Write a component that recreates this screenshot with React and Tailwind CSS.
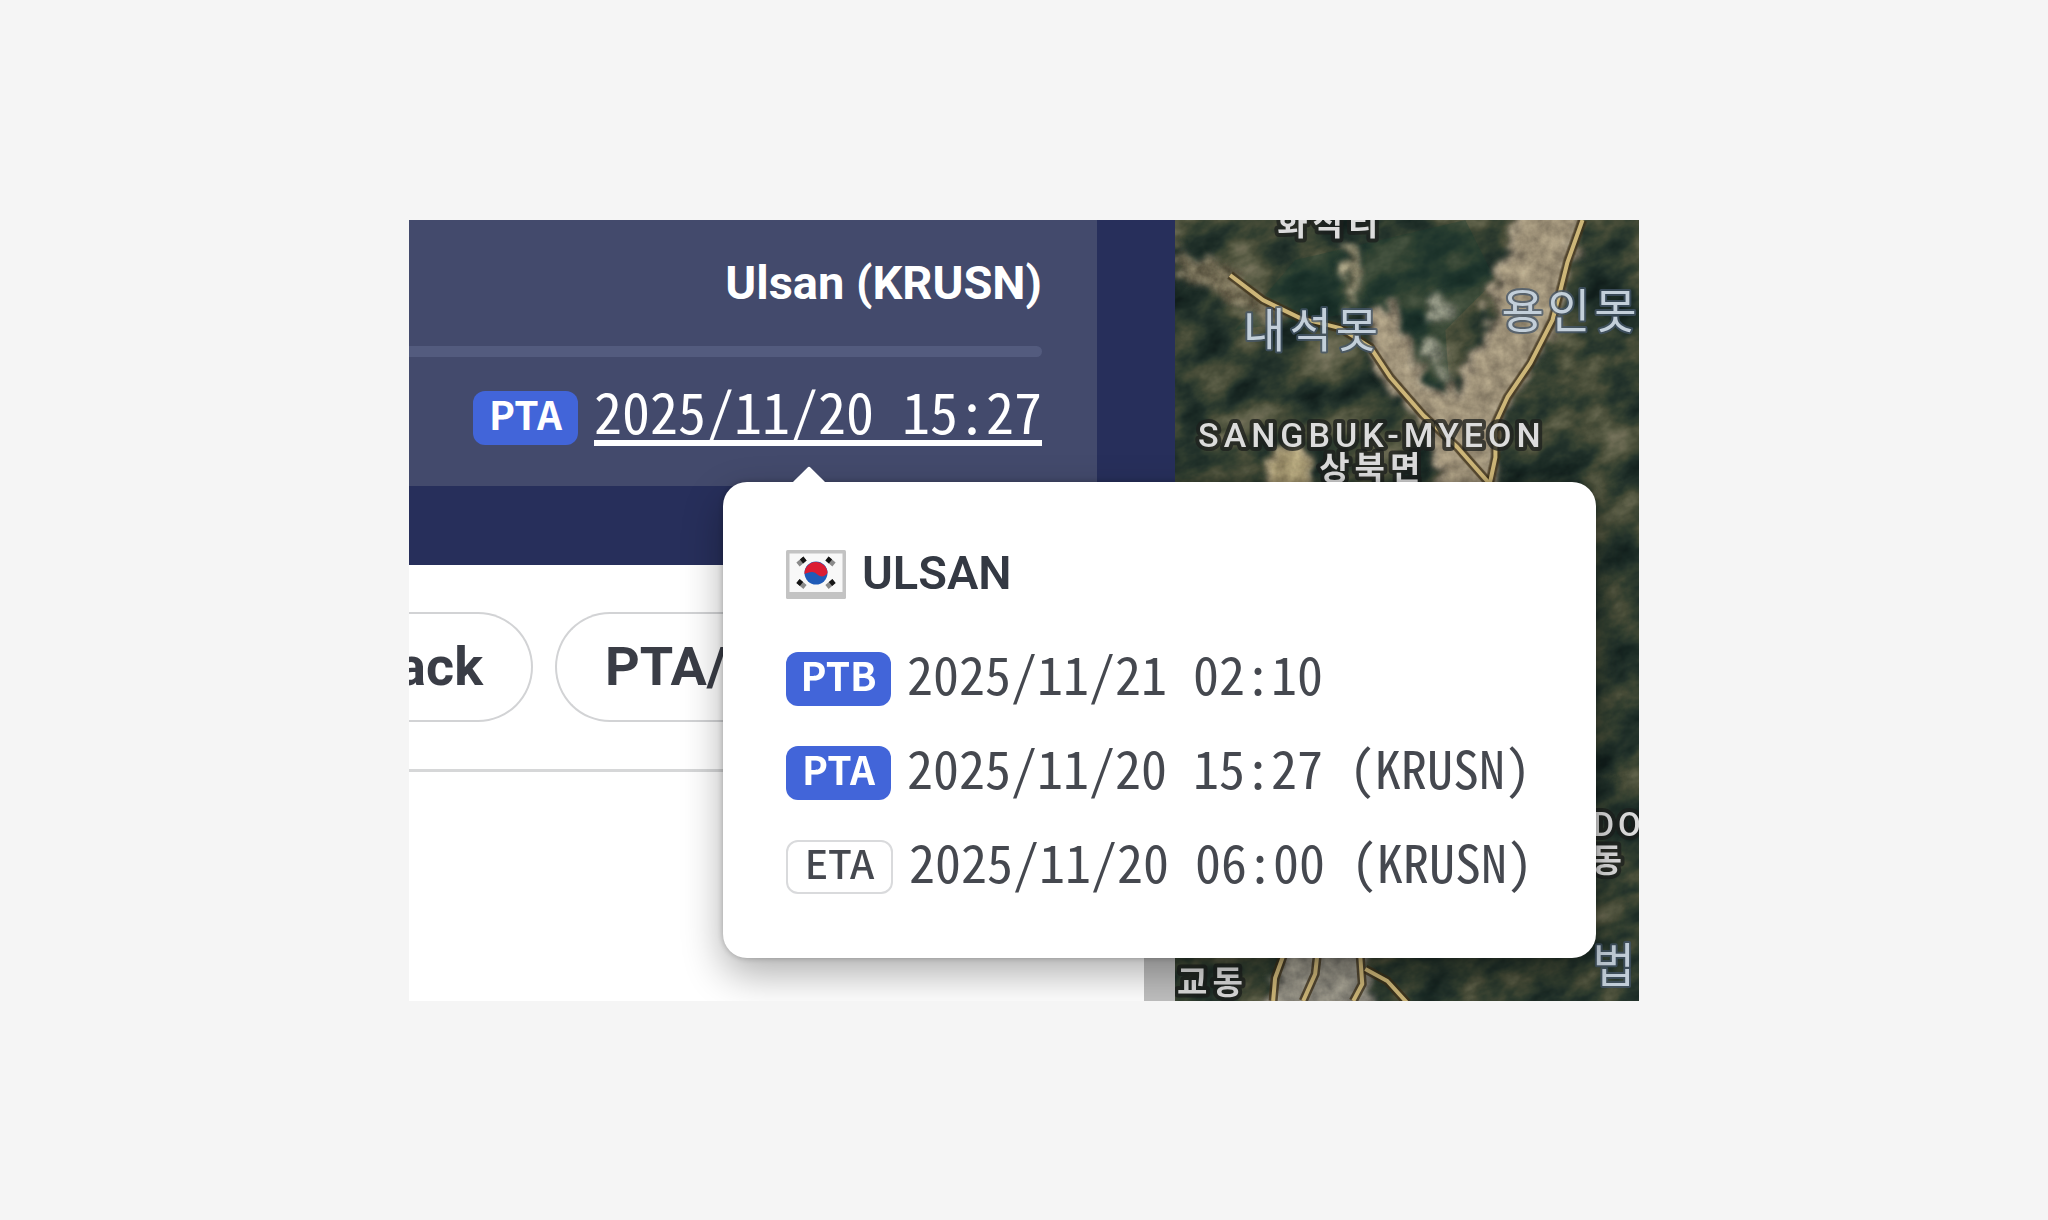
const SANS = "font-[Roboto,'Noto_Sans_CJK_KR',sans-serif]";
const MONO = "font-['Noto_Sans_Mono_CJK_KR','Noto_Sans_CJK_KR',monospace] slashed-zero";

function Badge({ outline, children }) {
  return (
    <span
      className={
        "font-['Noto_Sans_CJK_KR',sans-serif] flex h-[54px] shrink-0 items-center justify-center rounded-xl text-[39px] leading-none pb-2 " +
        (outline
          ? "w-[107px] border-2 border-[#d9dadc] font-medium text-[#45484f]"
          : "w-[105px] bg-[#4265d9] font-bold text-white")
      }
    >
      {children}
    </span>
  );
}

function KoreaFlag() {
  return (
    <svg viewBox="0 0 60 50" className="h-[50px] w-[60px] shrink-0" role="img" aria-label="South Korea">
      <rect width="60" height="49" rx="1.500" fill="#c3c3c3" />
      <rect x="3.500" y="3.500" width="53" height="38.500" fill="#f8f8f8" />
      <circle cx="30" cy="23" r="11.500" fill="#1f5bb8" />
      <path d="M18.500 24a11.500 11.500 0 0 1 23 -1c-2 3-5 4-7.500 3c-3-1-4-4-8-4c-3 0-5 1-7.500 2z" fill="#dc1c33" />
      <g fill="none">
        <path d="M12 14.500l7-6M48 14.500l-7-6M12 31l7 6M48 31l-7 6" stroke="#8a8a8a" strokeWidth="5" />
        <path d="M15.500 11.500l3.500-3M44.500 11.500l-3.500-3M12 31l3.500 3M48 31l-3.500 3" stroke="#151515" strokeWidth="5" />
      </g>
    </svg>
  );
}

function Label({ x, y, size, weight = 700, fill = "#dcdcdc", halo = "#1c1f1e", haloWidth = 8, gap = 0, children }) {
  return (
    <text
      x={x}
      y={y}
      fontSize={size}
      fontWeight={weight}
      fill={fill}
      stroke={halo}
      strokeWidth={haloWidth}
      strokeOpacity="0.75"
      strokeLinejoin="round"
      paintOrder="stroke"
      letterSpacing={gap}
    >
      {children}
    </text>
  );
}

function SatelliteMap() {
  const roads = [
    "M55 55L88 80L125 98L165 108L195 127L215 157L248 195L282 227L305 253L320 270",
    "M407 0L392 42L385 70L377 100L355 143L332 177L320 203L320 237L314 265",
    "M108 735L100 757L98 780",
    "M142 735L140 753L128 780",
    "M185 735L187 763L178 780",
    "M190 748L212 760L232 782",
  ];
  return (
    <svg
      viewBox="0 0 464 780"
      preserveAspectRatio="xMinYMin slice"
      className={"block h-full w-full " + SANS}
      role="img"
      aria-label="Satellite map"
    >
      <defs>
        <filter id="forest" x="0" y="0" width="100%" height="100%" colorInterpolationFilters="sRGB">
          <feTurbulence type="fractalNoise" baseFrequency="0.018 0.028" numOctaves="5" seed="4" />
          <feColorMatrix values="1.2 0 0 0 -0.1  1.2 0 0 0 -0.1  1.2 0 0 0 -0.1  0 0 0 0 1" />
          <feComponentTransfer>
            <feFuncR type="table" tableValues="0.05 0.07 0.10 0.14 0.20 0.28 0.36 0.44 0.5" />
            <feFuncG type="table" tableValues="0.10 0.12 0.16 0.20 0.25 0.30 0.37 0.43 0.5" />
            <feFuncB type="table" tableValues="0.09 0.11 0.14 0.17 0.19 0.22 0.28 0.34 0.4" />
          </feComponentTransfer>
        </filter>
        <filter id="town" x="-10%" y="-10%" width="120%" height="120%" colorInterpolationFilters="sRGB">
          <feTurbulence type="fractalNoise" baseFrequency="0.07" numOctaves="4" seed="5" result="n" />
          <feColorMatrix in="n" values="1.3 0 0 0 -0.14  1.25 0 0 0 -0.15  1.1 0 0 0 -0.13  0 0 0 0 1" result="grain" />
          <feDisplacementMap in="SourceGraphic" in2="n" scale="34" xChannelSelector="R" yChannelSelector="G" result="shape" />
          <feGaussianBlur in="shape" stdDeviation="3" result="soft" />
          <feComposite in="grain" in2="soft" operator="in" result="a" />
          <feBlend in="a" in2="soft" mode="multiply" result="b" />
          <feBlend in="b" in2="soft" mode="screen" />
        </filter>
      </defs>
      <rect width="464" height="780" fill="#24352c" />
      <g transform="rotate(-20 232 390)">
        <rect x="-300" y="-200" width="1064" height="1180" filter="url(#forest)" />
      </g>
      <path d="M120 40L290 0L320 60L270 110L275 180L230 170L200 90L60 110Z" fill="#1b3b30" opacity="0.35" />
      <g filter="url(#town)">
        <path d="M345 -10H405L392 60L378 110L340 170L320 205L322 270L262 270L258 205L205 160L190 100L212 85L232 125L250 165L284 178L300 130L318 100L312 70L336 30Z" fill="#7d735f" />
        <path d="M98 230H135L138 275H90Z" fill="#857a59" />
        <path d="M170 30L180 20L182 85L174 85Z" fill="#7c785c" />
        <path d="M0 30L60 50L110 100L100 104L40 70L0 55Z" fill="#5e573f" opacity="0.6" />
        <path d="M255 80l14-4l4 18l-16 8zM250 122l14 2l-4 14l-10-4zM262 144l12 2l-6 20z" fill="#737c6c" opacity="0.8" />
        <path d="M112 725H188L196 790H92Z" fill="#706f67" />
      </g>
      <g fill="none" strokeLinejoin="round">
        {roads.map((d) => (
          <path key={"edge" + d} d={d} stroke="#3c2f17" strokeWidth="9" opacity="0.75" />
        ))}
        {roads.map((d) => (
          <path key={d} d={d} stroke="#cdb678" strokeWidth="4" />
        ))}
      </g>
      <Label x={102} y={15} size={33} gap={5}>화석리</Label>
      <Label x={68} y={127} size={46} gap={4} weight={400} fill="#c3cfda" halo="#44566a" haloWidth={4}>내석못</Label>
      <Label x={326} y={108} size={46} gap={4} weight={400} fill="#c3cfda" halo="#44566a" haloWidth={4}>용인못</Label>
      <Label x={23} y={227} size={34} weight={500} gap={5}>SANGBUK-MYEON</Label>
      <Label x={144} y={260} size={33} gap={5}>상북면</Label>
      <Label x={417} y={615} size={33} weight={500} gap={4}>DO</Label>
      <Label x={416} y={651} size={33}>동</Label>
      <Label x={2} y={773} size={33} gap={5}>교동</Label>
      <Label x={417} y={761} size={46} weight={400} fill="#c3cfda" halo="#44566a" haloWidth={4}>법</Label>
    </svg>
  );
}

const rows = [
  { kind: "PTB", time: "2025/11/21 02:10" },
  { kind: "PTA", time: "2025/11/20 15:27 (KRUSN)" },
  { kind: "ETA", time: "2025/11/20 06:00 (KRUSN)", outline: true },
];

function PortPopover() {
  return (
    <div
      role="tooltip"
      className="absolute left-[129px] top-full z-20 mt-9 rounded-3xl bg-white px-[63px] pb-16 pt-[66px] shadow-[0_16px_40px_rgba(0,0,0,0.32),0_0_6px_rgba(0,0,0,0.25)]"
    >
      <span className="absolute -top-[11px] left-[74px] size-6 rotate-45 rounded-[2px] bg-white" />
      <h2 className="flex h-[54px] items-center gap-4 text-[47px] leading-none font-semibold text-[#343943]">
        <KoreaFlag />
        <span className="pb-1">ULSAN</span>
      </h2>
      <ul className="mt-[50px] flex flex-col gap-10">
        {rows.map((r) => (
          <li key={r.kind} className="flex h-[54px] items-center gap-4">
            <Badge outline={r.outline}>{r.kind}</Badge>
            <span className={MONO + " whitespace-pre pb-3 text-[52px] leading-none text-[#45484f]"}>{r.time}</span>
          </li>
        ))}
      </ul>
    </div>
  );
}

export default function App() {
  return (
    <main className={SANS + " flex min-h-screen items-center justify-center bg-[#f5f5f5]"}>
      <div className="flex w-full max-w-[1230px] overflow-hidden bg-white">
        <section className="relative z-10 flex w-[766px] shrink-0 flex-col">
          <header className="bg-[#272f5b] pb-[79px] pr-[78px]">
            <div className="flex flex-col items-end bg-[#434a6c] pb-10 pr-[55px] pt-9">
              <h1 className="text-[47px] leading-[54px] font-bold text-white">Ulsan (KRUSN)</h1>
              <div className="mt-9 h-[11px] w-full rounded-r-full bg-[#535b7e]" />
              <div className="mt-[33px] flex items-center gap-4">
                <Badge>PTA</Badge>
                <div className="relative">
                  <a href="#arrival" className={MONO + " block h-[56px] border-b-[6px] border-white text-[56px] leading-[40px] font-medium text-white"}>
                    2025/11/20 15:27
                  </a>
                  <PortPopover />
                </div>
              </div>
            </div>
          </header>
          <div className="flex grow">
            <div className="min-w-0 grow">
              <nav className="flex gap-[22px] border-b-[3px] border-[#d6d7d8] py-[47px]">
                <button type="button" className="flex h-[110px] w-[124px] shrink-0 items-center justify-end overflow-hidden rounded-r-full border-y-2 border-r-2 border-[#d2d3d5] pr-12 text-[54px] leading-none font-bold text-[#3a3d46]">
                  ack
                </button>
                <button type="button" className="flex h-[110px] grow items-center rounded-l-full border-y-2 border-l-2 border-[#d2d3d5] pl-12 text-[54px] leading-none font-bold text-[#3a3d46]">
                  PTA/
                </button>
              </nav>
              <div className="h-[229px]" />
            </div>
            <div className="w-[31px] shrink-0 bg-[#c0c0c0]" />
          </div>
        </section>
        <aside className="relative min-w-0 grow">
          <div className="absolute inset-0">
            <SatelliteMap />
          </div>
        </aside>
      </div>
    </main>
  );
}
